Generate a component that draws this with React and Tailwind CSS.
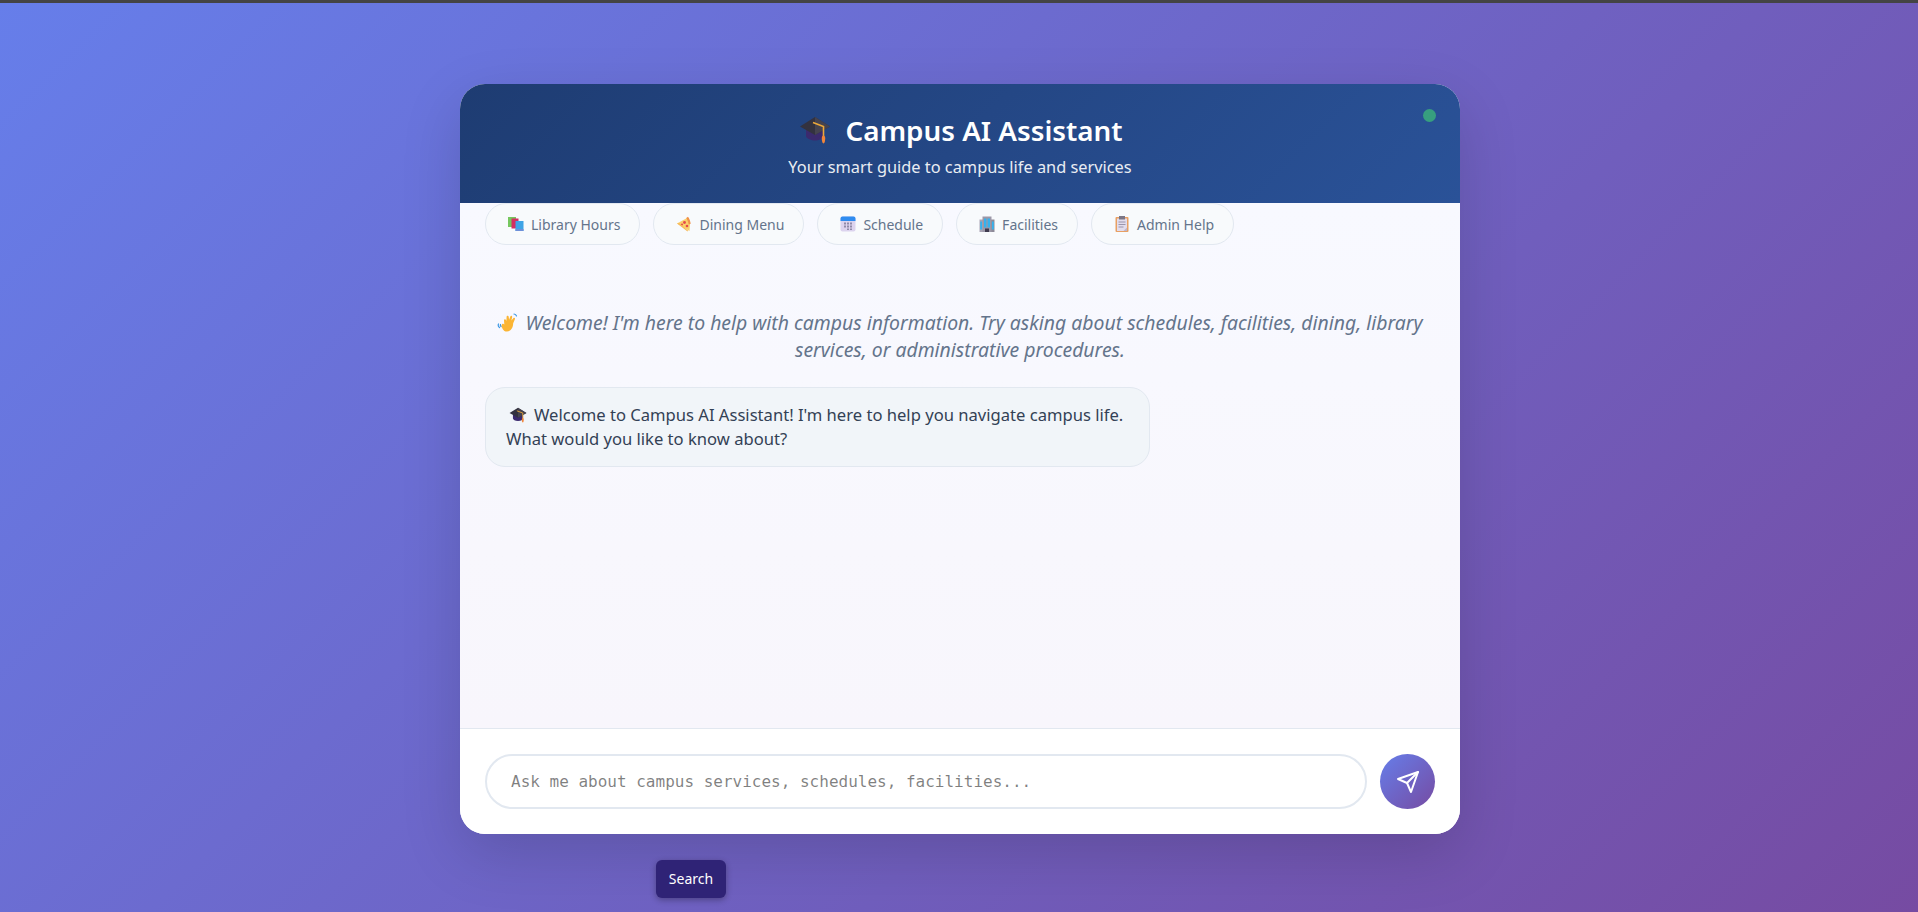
const Cap = ({ className }) => (
  <svg viewBox="0 0 32 30" className={className} role="img" aria-label="🎓">
    <path d="M7 13v8c0 2 4 4.500 9 4.500s9-2.500 9-4.500v-8z" fill="#3b2a6e" />
    <path d="M16 2 31 11.500 16 20 1 11.500z" fill="#33323f" />
    <path d="M16 2 31 11.500 16 20z" fill="#45434f" />
    <path d="M14 7.500 24.500 11.500V21" fill="none" stroke="#eba83a" strokeWidth="1.600" />
    <path d="M24.500 20.500c1.200 0 1.700 1 1.700 3 0 2.500-.6 5-1.700 5s-1.700-2.500-1.700-5c0-2 .5-3 1.700-3z" fill="#f2863a" />
  </svg>
);

const Books = ({ className }) => (
  <svg viewBox="0 0 16 14" className={className}>
    <rect x="0" y="0" width="8" height="10" fill="#76c75e" />
    <rect x="3.500" y="1.500" width="7" height="10" fill="#d42f62" />
    <rect x="7.500" y="4" width="8" height="10" fill="#3fa4e6" />
    <rect x="7.500" y="12" width="8" height="2" fill="#6e8fd8" />
  </svg>
);

const Pizza = ({ className }) => (
  <svg viewBox="0 0 16 16" className={className}>
    <path d="M1 7.500 12 1.500c1 2 1.500 3.500 2 6l-.5 7.500z" fill="#fbd06a" />
    <path d="M12 .8c1.400 2 2.400 4.500 2.700 7l-2 .6C12.300 6 11.400 4 10.200 2z" fill="#f0924a" />
    <circle cx="8.500" cy="6.500" r="1.400" fill="#e5484d" />
    <circle cx="6" cy="8.500" r="1" fill="#e5484d" />
    <circle cx="11" cy="10" r="1.300" fill="#e5484d" />
    <path d="M1 7.500 3 7l9 7.500-.5 1z" fill="#f7b95a" />
  </svg>
);

const Calendar = ({ className }) => (
  <svg viewBox="0 0 16 16" className={className}>
    <rect x="0.500" y="0.500" width="15" height="15" rx="2" fill="#dcd3ee" />
    <path d="M.5 5V2.500a2 2 0 0 1 2-2h11a2 2 0 0 1 2 2V5z" fill="#2f8cf0" />
    <g fill="#8f8aa8">
      <rect x="4" y="6.500" width="2" height="2" />
      <rect x="7" y="6.500" width="2" height="2" />
      <rect x="10" y="6.500" width="2" height="2" />
      <rect x="4" y="9.500" width="2" height="2" />
      <rect x="7" y="9.500" width="2" height="2" />
      <rect x="10" y="9.500" width="2" height="2" />
      <rect x="7" y="12.500" width="2" height="1.500" />
      <rect x="10" y="12.500" width="2" height="1.500" />
    </g>
  </svg>
);

const Building = ({ className }) => (
  <svg viewBox="0 0 16 16" className={className}>
    <rect x="0.500" y="3.500" width="4" height="12.500" fill="#a9a4b4" />
    <rect x="11.500" y="3.500" width="4" height="12.500" fill="#8d8a98" />
    <rect x="3.500" y="0.500" width="9" height="15.500" fill="#9c98a8" />
    <g fill="#35b2ee">
      <rect x="1.200" y="5.500" width="1.800" height="8" />
      <rect x="5" y="2.500" width="2.400" height="9" />
      <rect x="8.600" y="2.500" width="2.400" height="9" />
      <rect x="13" y="5.500" width="1.800" height="8" />
    </g>
    <rect x="6" y="12.500" width="4" height="3.500" fill="#3f3a4e" />
  </svg>
);

const Clipboard = ({ className }) => (
  <svg viewBox="0 0 16 16" className={className}>
    <rect x="1.500" y="1" width="13" height="15" rx="1" fill="#e8a063" />
    <rect x="3" y="2.500" width="10" height="12.500" fill="#e2dcec" />
    <rect x="5" y="0" width="6" height="3.500" fill="#7b7686" />
    <g fill="#9a94ac">
      <rect x="4.500" y="5.500" width="7" height="1" />
      <rect x="4.500" y="8" width="7" height="1" />
      <rect x="4.500" y="10.500" width="5" height="1" />
    </g>
    <path d="M13 11.500V15H9.500z" fill="#bdb6cc" />
  </svg>
);

const Wave = ({ className }) => (
  <svg viewBox="0 0 22 20" className={className} role="img" aria-label="👋">
    <path d="M5 12.500c-.6-1.200.6-2.300 1.700-1.500l.6.500L7 7.500c-.2-1.400 1.500-1.900 2-.6l.4 1.200.2-4.200c.1-1.400 1.900-1.400 2.100-.1l.4 3 1.200-3.400c.4-1.200 2.100-.7 1.900.6l-.8 3.500 1.900-2.300c.8-.9 2.100 0 1.600 1.100l-1.700 4c-.2 5.200-2.900 8.300-6.300 8.300-3 0-4.200-2.100-5.900-6.400z" fill="#fbb534" />
    <g fill="none" stroke="#3f9ae6" strokeWidth="1.200" strokeLinecap="round">
      <path d="M1.500 11c-.6 1.200-.2 2.500 1 3.500" />
      <path d="M3.500 11.500c-.4.800-.1 1.500.5 2" />
      <path d="M17 1c1.200.1 2.100.8 2.500 2" />
    </g>
  </svg>
);

const chips = [
  { Icon: Books, label: 'Library Hours' },
  { Icon: Pizza, label: 'Dining Menu' },
  { Icon: Calendar, label: 'Schedule' },
  { Icon: Building, label: 'Facilities' },
  { Icon: Clipboard, label: 'Admin Help' },
];

const App = () => {
  return (
    <div className="relative h-[912px] overflow-hidden bg-[linear-gradient(135deg,#667eea_0%,#764ba2_100%)] font-['Noto_Sans',sans-serif]">
      <div className="h-[3px] bg-[#444]" />
      <div className="flex justify-center pt-[81px] pl-[2px]">
        <div className="flex h-[750px] w-[1000px] flex-col overflow-hidden rounded-[25px] bg-white shadow-[0_20px_60px_rgba(0,0,0,0.15)]">
          <header className="relative h-[119px] shrink-0 bg-[linear-gradient(135deg,#1e3c72_0%,#2a5298_100%)] pt-[25px] text-center text-white">
            <h1 className="flex items-center justify-center gap-[14px] pl-[2px] text-[27.8px] leading-[42px] font-semibold">
              <Cap className="h-[30px] w-[32px]" />
              Campus AI Assistant
            </h1>
            <p className="mt-[4px] text-[16.35px] leading-[24px] opacity-90">Your smart guide to campus life and services</p>
            <span className="absolute top-[25px] right-[24px] h-[13px] w-[13px] rounded-full bg-[#379f7f]" />
          </header>

          <div className="flex flex-1 flex-col bg-gradient-to-b from-[#f8f9ff] to-[#f8f6fc] px-[25px]">
            <div className="flex gap-[13px]">
              {chips.map(({ Icon, label }) => (
                <button key={label} className="flex h-[42px] items-center gap-[5px] rounded-[21px] border border-[#e2e8f0] bg-[#f8fafc] pr-[19px] pl-[20px] text-[14px] text-[#64748b]">
                  <span className="flex w-[20px] justify-center">
                    <Icon className="h-[16px] w-[16px]" />
                  </span>
                  {label}
                </button>
              ))}
            </div>
            <p className="mt-[64px] text-center text-[19.4px] leading-[27px] text-[#64748b] italic">
              <Wave className="mr-[6px] inline-block h-[20px] w-[22px] align-[-3px]" />
              Welcome! I'm here to help with campus information. Try asking about schedules, facilities, dining, library services, or administrative procedures.
            </p>
            <div className="mt-[24px] w-[665px] rounded-[20px] border border-[#e2e8f0] bg-[#f1f5f9] px-[20px] py-[15px] text-[16.6px] leading-[24px] text-[#334155]">
              <Cap className="mr-[7px] ml-[3px] inline-block h-[18px] w-[18px] align-[-3px]" />
              Welcome to Campus AI Assistant! I'm here to help you navigate campus life. What would you like to know about?
            </div>
          </div>

          <div className="flex h-[106px] shrink-0 items-center gap-[13px] border-t border-[#e2e8f0] bg-white px-[25px]">
            <input
              placeholder="Ask me about campus services, schedules, facilities..."
              className="h-[55px] flex-1 rounded-[28px] border-2 border-[#e2e8f0] px-[24px] font-['DejaVu_Sans_Mono',monospace] text-[16px] outline-none"
            />
            <button className="flex h-[55px] w-[55px] items-center justify-center rounded-full bg-[linear-gradient(135deg,#667eea_0%,#764ba2_100%)] text-white">
              <svg viewBox="0 0 24 24" className="h-[24px] w-[24px]" fill="none" stroke="currentColor" strokeWidth="2" strokeLinecap="round" strokeLinejoin="round">
                <line x1="22" y1="2" x2="11" y2="13" />
                <polygon points="22 2 15 22 11 13 2 9 22 2" />
              </svg>
            </button>
          </div>
        </div>
      </div>

      <button className="absolute top-[860px] left-[656px] h-[38px] w-[70px] rounded-[6px] bg-[#2f2376] pb-[2px] text-[14px] text-white shadow-[0_2px_6px_rgba(0,0,0,0.3)]">
        Search
      </button>
    </div>
  );
};

export default App;
